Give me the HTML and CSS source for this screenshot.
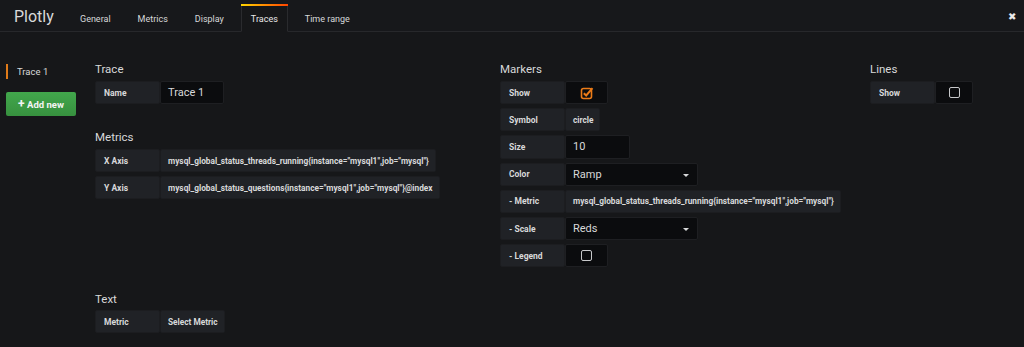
FILE: index.html
```html
<!DOCTYPE html>
<html lang="en">
<head>
    <meta charset="UTF-8">
    <title>Plotly</title>
    <link rel="stylesheet" href="styles.css">
</head>
<body>

    <!-- Top bar with tabs -->
    <div class="header">
        <div class="logo">Plotly</div>
        <ul class="tabs">
            <li class="tab">General</li>
            <li class="tab">Metrics</li>
            <li class="tab">Display</li>
            <li class="tab active">Traces</li>
            <li class="tab">Time range</li>
        </ul>
        <div class="close">&#10006;</div>
    </div>

    <div class="editor">
        <!-- Trace list -->
        <div class="sidebar">
            <div class="trace-item">Trace 1</div>
            <button class="add-button"><span class="plus">+</span> Add new</button>
        </div>

        <div class="section-col col-left">
            <h5>Trace</h5>
            <div class="form-row">
                <span class="label">Name</span>
                <span class="input input-name">Trace 1</span>
            </div>

            <h5 class="spaced">Metrics</h5>
            <div class="form-row">
                <span class="label">X Axis</span>
                <span class="label value">mysql_global_status_threads_running{instance="mysql1",job="mysql"}</span>
            </div>
            <div class="form-row">
                <span class="label">Y Axis</span>
                <span class="label value">mysql_global_status_questions{instance="mysql1",job="mysql"}@index</span>
            </div>

            <h5 class="text-head">Text</h5>
            <div class="form-row">
                <span class="label">Metric</span>
                <span class="label value">Select Metric</span>
            </div>
        </div>

        <div class="section-col col-mid">
            <h5>Markers</h5>
            <div class="form-row">
                <span class="label">Show</span>
                <span class="input check-box">
                    <svg width="14" height="14" viewBox="0 0 14 14">
                        <rect x="1.5" y="2.5" width="10" height="10" rx="2" fill="none" stroke="#eb7b18" stroke-width="1.6"/>
                        <path d="M3.8 7.2 L6.2 9.5 L12.5 2.2" fill="none" stroke="#eb7b18" stroke-width="2"/>
                    </svg>
                </span>
            </div>
            <div class="form-row">
                <span class="label">Symbol</span>
                <span class="label value">circle</span>
            </div>
            <div class="form-row">
                <span class="label">Size</span>
                <span class="input input-size">10</span>
            </div>
            <div class="form-row">
                <span class="label">Color</span>
                <span class="input select">Ramp<i class="caret"></i></span>
            </div>
            <div class="form-row">
                <span class="label">- Metric</span>
                <span class="label value">mysql_global_status_threads_running{instance="mysql1",job="mysql"}</span>
            </div>
            <div class="form-row">
                <span class="label">- Scale</span>
                <span class="input select">Reds<i class="caret"></i></span>
            </div>
            <div class="form-row">
                <span class="label">- Legend</span>
                <span class="input check-box"><i class="empty-box"></i></span>
            </div>
        </div>

        <div class="section-col col-right">
            <h5>Lines</h5>
            <div class="form-row">
                <span class="label">Show</span>
                <span class="input check-box small-box"><i class="empty-box"></i></span>
            </div>
        </div>
    </div>

</body>
</html>
```

FILE: styles.css
```css
/* Basic reset */
* {
    margin: 0;
    padding: 0;
    box-sizing: border-box;
}

body {
    font-family: Roboto, 'Liberation Sans', sans-serif;
    background-color: #161719;
    color: #d8d9da;
    width: 1024px;
    height: 347px;
    overflow: hidden;
}

/* Header */
.header {
    display: flex;
    align-items: flex-end;
    height: 32px;
    background-color: #17181b;
    border-bottom: 1px solid #27282b;
    position: relative;
}

.logo {
    font-size: 16px;
    color: #d8d9da;
    width: 70px;
    padding-left: 14px;
    align-self: center;
    padding-top: 2px;
}

.tabs {
    display: flex;
    list-style: none;
    height: 28px;
    margin-bottom: -1px;
}

.tab {
    font-size: 9px;
    color: #d8d9da;
    padding: 0 9px;
    margin-right: 7px;
    line-height: 27px;
    border: 1px solid transparent;
    border-top-width: 2px;
}

.tab.active {
    background-color: #161719;
    border-color: #2a2b2e;
    border-bottom-color: #161719;
    position: relative;
    color: #e9e9ea;
}

.tab.active::before {
    content: "";
    position: absolute;
    left: -1px;
    right: -1px;
    top: -2px;
    height: 2px;
    background: linear-gradient(to right, #ffd500, #ff4400);
}

.close {
    position: absolute;
    right: 8px;
    top: 11px;
    font-size: 10px;
    color: #e9e9ea;
}

/* Editor area */
.editor {
    display: flex;
    padding-top: 31px;
}

.sidebar {
    width: 95px;
    padding-left: 6px;
}

.trace-item {
    font-size: 9.5px;
    color: #d8d9da;
    border-left: 2px solid #e07b19;
    padding-left: 9px;
    height: 15px;
    line-height: 15px;
    margin-top: 1px;
}

.add-button {
    margin-top: 13px;
    width: 70px;
    height: 24px;
    border: none;
    border-radius: 2px;
    background: linear-gradient(to bottom, #42a74c, #37913f);
    color: #f4f4f4;
    font-family: Roboto, 'Liberation Sans', sans-serif;
    font-size: 9.5px;
    font-weight: bold;
}

.plus {
    font-size: 12px;
    font-weight: bold;
}

.section-col h5 {
    font-size: 11.5px;
    font-weight: normal;
    color: #d8d9da;
    height: 13px;
    line-height: 13px;
    margin-bottom: 5px;
}

.section-col h5.spaced {
    margin-top: 27px;
    margin-bottom: 5px;
}

.section-col h5.text-head {
    margin-top: 94px;
    margin-bottom: 4px;
}

.col-left {
    width: 405px;
}

.col-mid {
    width: 370px;
}

/* Form rows */
.form-row {
    display: flex;
    height: 23px;
    margin-bottom: 4px;
}

.col-mid .form-row {
    height: 23.2px;
}

.label {
    display: flex;
    align-items: center;
    width: 65px;
    padding-left: 8px;
    background-color: #202226;
    border: 1px solid #1c1d20;
    border-radius: 2px;
    font-size: 8.5px;
    font-weight: bold;
    color: #d8d9da;
    white-space: nowrap;
}

.label.value {
    width: auto;
    padding: 0 6px 0 7px;
    font-size: 8.3px;
    border-left: 1px solid #1b1c1f;
}

.input {
    display: flex;
    align-items: center;
    background-color: #0b0c0e;
    border: 1px solid #1e1f22;
    border-radius: 2px;
    padding-left: 7px;
    font-size: 11px;
    color: #d8d9da;
}

.input-name {
    width: 64px;
}

.input-size {
    width: 65px;
}

.select {
    width: 133px;
    position: relative;
}

.caret {
    position: absolute;
    right: 8px;
    top: 10px;
    border-left: 3px solid transparent;
    border-right: 3px solid transparent;
    border-top: 3px solid #d8d9da;
}

.check-box {
    width: 43px;
    justify-content: center;
    padding-left: 0;
}

.small-box {
    width: 38px;
}

.empty-box {
    display: block;
    width: 11px;
    height: 11px;
    border: 1.3px solid #c7c8ca;
    border-radius: 2px;
}
```
